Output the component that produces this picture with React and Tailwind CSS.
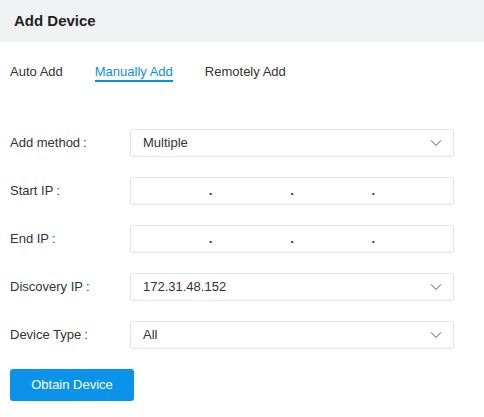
import React from "react";

const Chevron = () => (
  <svg width="12" height="8" viewBox="0 0 12 8" fill="none" className="text-[#9a9a9a]">
    <polyline points="1,1.5 6,6.5 11,1.5" stroke="currentColor" strokeWidth="1.1" />
  </svg>
);

const Row = ({ label, children }) => (
  <div className="flex items-center">
    <div className="w-[130px] pl-[10px] text-[13px] text-[#333]">
      {label}
      <span className="ml-[3px]">:</span>
    </div>
    {children}
  </div>
);

const Select = ({ value }) => (
  <div className="flex h-[28px] w-[324px] items-center justify-between rounded-[3px] border border-[#e2e3e5] pl-[12px] pr-[11px] text-[13px] text-[#333]">
    <span>{value}</span>
    <Chevron />
  </div>
);

const IpBox = () => (
  <div className="flex h-[28px] w-[324px] items-center rounded-[3px] border border-[#e2e3e5] text-[13px] font-bold text-[#333]">
    <span className="flex-1" />
    <span>.</span>
    <span className="flex-1" />
    <span>.</span>
    <span className="flex-1" />
    <span>.</span>
    <span className="flex-1" />
  </div>
);

export default function App() {
  return (
    <div
      className="h-[417px] w-[484px] bg-white"
      style={{ fontFamily: '"Liberation Sans", Arial, sans-serif' }}
    >
      <header className="flex h-[42px] items-center bg-[#f1f2f4] pl-[14px]">
        <h1 className="text-[15px] font-bold text-[#222]">Add Device</h1>
      </header>

      <nav className="flex gap-[32px] pl-[10px] pt-[22px] text-[13px] leading-[16px] text-[#333]">
        <span className="border-b-2 border-transparent">Auto Add</span>
        <span className="border-b-2 border-[#0a8ee8] text-[#0a8ee8]">Manually Add</span>
        <span className="border-b-2 border-transparent">Remotely Add</span>
      </nav>

      <form className="flex flex-col gap-[20px] pt-[47px]">
        <Row label="Add method">
          <Select value="Multiple" />
        </Row>
        <Row label="Start IP">
          <IpBox />
        </Row>
        <Row label="End IP">
          <IpBox />
        </Row>
        <Row label="Discovery IP">
          <Select value="172.31.48.152" />
        </Row>
        <Row label="Device Type">
          <Select value="All" />
        </Row>
        <div className="pl-[10px]">
          <button
            type="button"
            className="h-[32px] w-[124px] rounded-[3px] bg-[#0a93e9] text-[13px] text-white"
          >
            Obtain Device
          </button>
        </div>
      </form>
    </div>
  );
}
